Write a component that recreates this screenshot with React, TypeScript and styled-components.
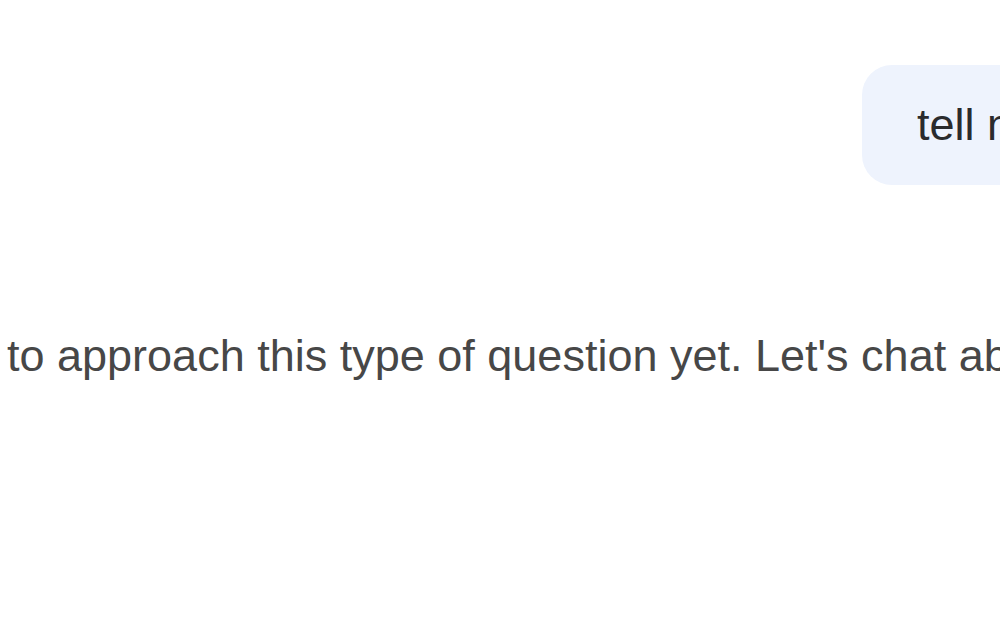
import React from "react";
import styled, { createGlobalStyle } from "styled-components";

const Global = createGlobalStyle`
  html, body {
    margin: 0;
    padding: 0;
    background: #ffffff;
    overflow: hidden;
  }
  * { box-sizing: border-box; }
`;

const Page = styled.div`
  width: 1000px;
  height: 625px;
  overflow: hidden;
  background: #ffffff;
  font-family: "Liberation Sans", Arial, Helvetica, sans-serif;
  font-size: 45px;
  line-height: 52px;
  padding-top: 65px;
  display: flex;
  flex-direction: column;
`;

const UserRow = styled.div`
  display: flex;
  padding-left: 862px;
  width: 2000px;
`;

const Bubble = styled.div`
  height: 120px;
  display: flex;
  align-items: center;
  padding: 0 54px 0 55px;
  background: #eef3fd;
  border-radius: 30px;
  color: #2a2b2d;
  white-space: nowrap;
`;

const Response = styled.div`
  margin-top: 145px;
  padding-left: 7px;
  width: 2000px;
  color: #474747;
  white-space: nowrap;
`;

export default function App() {
  return (
    <>
      <Global />
      <Page>
        <UserRow>
          <Bubble>tell me about the election</Bubble>
        </UserRow>
        <Response>
          to approach this type of question yet. Let's chat about something else.
        </Response>
      </Page>
    </>
  );
}
